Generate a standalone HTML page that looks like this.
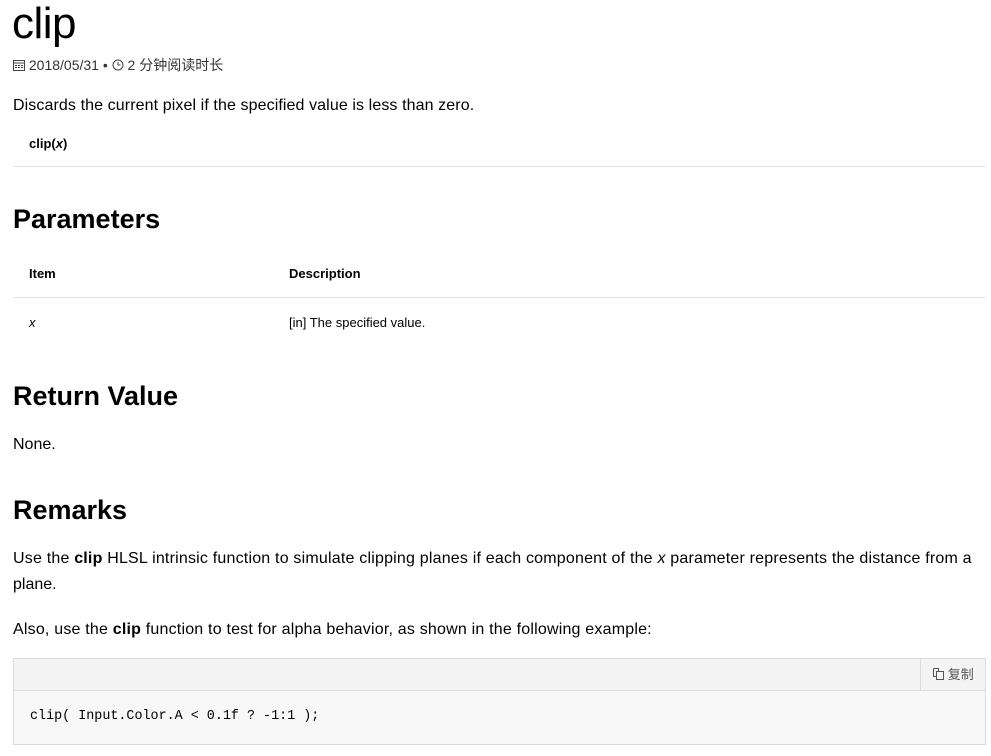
<!DOCTYPE html>
<html><head><meta charset="utf-8"><style>
body{margin:0;background:#fff;font-family:"Liberation Sans","Noto Sans CJK SC",sans-serif;color:#000;width:991px;height:756px;overflow:hidden;position:relative}
.a{position:absolute;white-space:nowrap}
h1{position:absolute;margin:0;font-weight:normal;font-size:44px;left:12px;top:-1px;letter-spacing:-0.5px}
h2{position:absolute;margin:0;font-weight:bold;font-size:27px;left:13px}
.p{font-size:16px}
.sm{font-size:13px}
.line{position:absolute;left:13px;right:5px;height:1px;background:#e3e3e3}
</style></head><body>
<h1>clip</h1>
<div class="a" style="left:13px;top:55px;color:#333;font-size:14px">
<svg width="12" height="12" style="vertical-align:-1px"><rect x="0.5" y="1.5" width="11" height="10" fill="none" stroke="#444"/><line x1="0" y1="4" x2="12" y2="4" stroke="#444"/><g fill="#444"><rect x="2" y="6" width="2" height="1"/><rect x="5" y="6" width="2" height="1"/><rect x="8" y="6" width="2" height="1"/><rect x="2" y="8" width="2" height="1"/><rect x="5" y="8" width="2" height="1"/><rect x="8" y="8" width="2" height="1"/></g></svg> 2018/05/31 • <svg width="12" height="12" style="vertical-align:-1px"><circle cx="6" cy="6" r="5" fill="none" stroke="#444"/><path d="M6 3v3h2.5" fill="none" stroke="#444"/></svg> 2 分钟阅读时长</div>
<div class="a p" style="left:13px;top:97px;letter-spacing:0.1px">Discards the current pixel if the specified value is less than zero.</div>
<div class="a sm" style="left:29px;top:136px;font-weight:bold">clip(<i>x</i>)</div>
<div class="line" style="top:166px"></div>
<h2 style="top:204px">Parameters</h2>
<div class="a sm" style="left:29px;top:266px;font-weight:bold">Item</div>
<div class="a sm" style="left:289px;top:266px;font-weight:bold">Description</div>
<div class="line" style="top:297px"></div>
<div class="a sm" style="left:29px;top:315px;font-style:italic">x</div>
<div class="a sm" style="left:289px;top:315px">[in] The specified value.</div>
<h2 style="top:381px">Return Value</h2>
<div class="a p" style="left:13px;top:436px">None.</div>
<h2 style="top:495px">Remarks</h2>
<div class="a p" style="left:13px;top:550px;letter-spacing:0.2px">Use the <b>clip</b> HLSL intrinsic function to simulate clipping planes if each component of the <i>x</i> parameter represents the distance from a</div>
<div class="a p" style="left:13px;top:576px">plane.</div>
<div class="a p" style="left:13px;top:621px;letter-spacing:0.2px">Also, use the <b>clip</b> function to test for alpha behavior, as shown in the following example:</div>
<div style="position:absolute;left:13px;top:658px;width:971px;height:85px;border:1px solid #dcdcdc;background:#f8f8f8">
<div style="position:absolute;left:0;right:0;top:0;height:31px;background:#f4f4f4;border-bottom:1px solid #dcdcdc"></div>
<div style="position:absolute;left:906px;top:0;width:65px;height:31px;border-left:1px solid #dcdcdc;font-size:13px;color:#555;line-height:31px;text-align:center"><svg width="11" height="12" style="vertical-align:-1px"><path d="M0.5 0.5h5v3h3M0.5 0.5v8h3" fill="none" stroke="#555"/><rect x="3.5" y="3.5" width="7" height="8" fill="#f4f4f4" stroke="#555"/></svg> 复制</div>
<div class="a" style="left:16px;top:50px;font-family:'Liberation Mono',monospace;font-size:13.4px">clip( Input.Color.A &lt; 0.1f ? -1:1 );</div>
</div>
</body></html>
